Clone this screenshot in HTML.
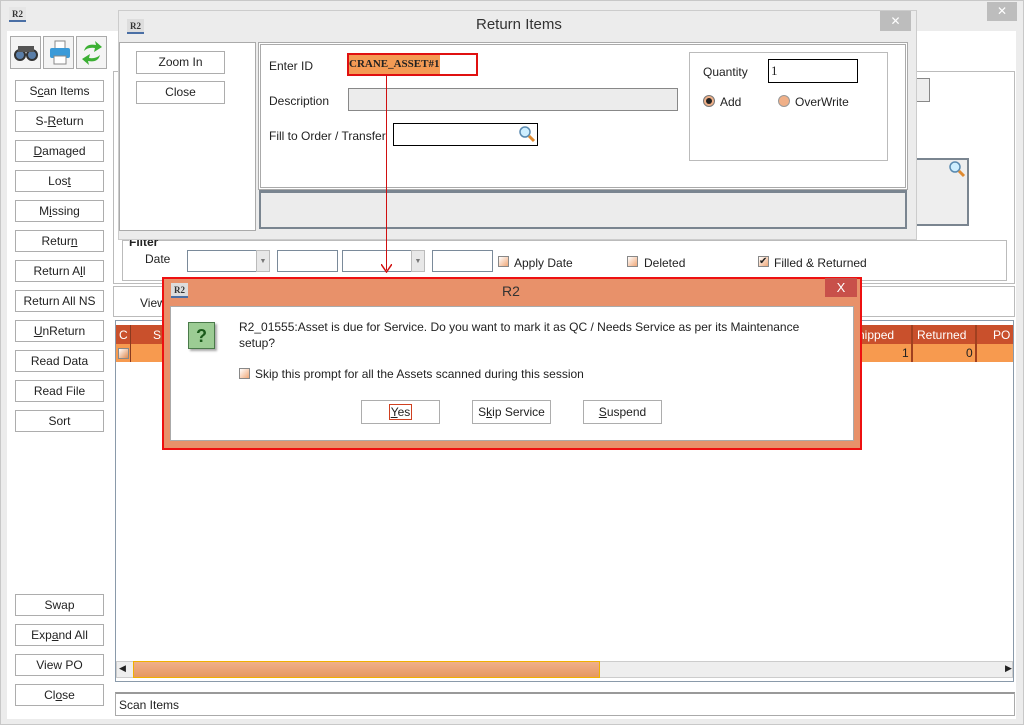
<!DOCTYPE html>
<html><head><meta charset="utf-8"><style>
*{box-sizing:border-box;margin:0;padding:0}
body{width:1024px;height:725px;overflow:hidden;background:#ececec;font-family:"Liberation Sans",Arial,sans-serif;font-size:12px;color:#222;position:relative}
.a{position:absolute}
.btn{position:absolute;background:#fff;border:1px solid #adadad;text-align:center;line-height:20px;font-size:12px;color:#222}
.w{background:#fff}
.cb{position:absolute;width:11px;height:11px;border:1px solid #888;background:linear-gradient(135deg,#fff,#f0a878)}
.lbl{position:absolute;font-size:12px}
</style></head><body>
<div class="a" style="left:0;top:0;width:1024px;height:725px;border:1px solid #c8c8c8"></div>
<div class="a" style="left:9px;top:7px;width:17px;height:15px;border-bottom:2px solid #4a6fa5;background:#e6e6e6;font:bold 9px 'Liberation Serif',serif;color:#333;text-align:center;line-height:14px">R2</div>
<div class="a" style="left:987px;top:2px;width:30px;height:19px;background:#bdbdbd;color:#fff;text-align:center;font-size:12px;line-height:19px">✕</div>
<div class="a w" style="left:7px;top:31px;width:103px;height:688px"></div>
<div class="a" style="left:10px;top:36px;width:31px;height:33px;border:1px solid #aaa;background:#f4f4f4"></div>
<div class="a" style="left:43px;top:36px;width:31px;height:33px;border:1px solid #aaa;background:#f4f4f4"></div>
<div class="a" style="left:76px;top:36px;width:31px;height:33px;border:1px solid #aaa;background:#f4f4f4"></div>
<svg class="a" style="left:13px;top:42px" width="26" height="20"><circle cx="7" cy="13" r="5" fill="#5a7ea8" stroke="#333" stroke-width="2"/><circle cx="19" cy="13" r="5" fill="#5a7ea8" stroke="#333" stroke-width="2"/><rect x="5" y="4" width="16" height="6" fill="#555"/></svg>
<svg class="a" style="left:48px;top:40px" width="24" height="26"><rect x="7" y="1" width="10" height="8" fill="#fff" stroke="#888"/><rect x="2" y="8" width="20" height="10" rx="2" fill="#3a9ad8"/><rect x="6" y="16" width="12" height="8" fill="#fff" stroke="#888"/></svg>
<svg class="a" style="left:81px;top:40px" width="22" height="26"><path d="M3 11 Q5 3 15 5 L14 1 L21 7 L13 12 L14 8 Q7 7 3 11Z" fill="#3cb034"/><path d="M19 15 Q17 23 7 21 L8 25 L1 19 L9 14 L8 18 Q15 19 19 15Z" fill="#3cb034"/></svg>
<div class="btn" style="left:15px;top:80px;width:89px;height:22px">S<u>c</u>an Items</div>
<div class="btn" style="left:15px;top:110px;width:89px;height:22px">S-<u>R</u>eturn</div>
<div class="btn" style="left:15px;top:140px;width:89px;height:22px"><u>D</u>amaged</div>
<div class="btn" style="left:15px;top:170px;width:89px;height:22px">Los<u>t</u></div>
<div class="btn" style="left:15px;top:200px;width:89px;height:22px">M<u>i</u>ssing</div>
<div class="btn" style="left:15px;top:230px;width:89px;height:22px">Retur<u>n</u></div>
<div class="btn" style="left:15px;top:260px;width:89px;height:22px">Return A<u>l</u>l</div>
<div class="btn" style="left:15px;top:290px;width:89px;height:22px">Return All NS</div>
<div class="btn" style="left:15px;top:320px;width:89px;height:22px"><u>U</u>nReturn</div>
<div class="btn" style="left:15px;top:350px;width:89px;height:22px">Read Data</div>
<div class="btn" style="left:15px;top:380px;width:89px;height:22px">Read File</div>
<div class="btn" style="left:15px;top:410px;width:89px;height:22px">Sort</div>
<div class="btn" style="left:15px;top:594px;width:89px;height:22px">Swap</div>
<div class="btn" style="left:15px;top:624px;width:89px;height:22px">Exp<u>a</u>nd All</div>
<div class="btn" style="left:15px;top:654px;width:89px;height:22px">View PO</div>
<div class="btn" style="left:15px;top:684px;width:89px;height:22px">Cl<u>o</u>se</div>
<div class="a w" style="left:110px;top:31px;width:906px;height:688px"></div>
<div class="a" style="left:113px;top:71px;width:902px;height:213px;border:1px solid #bbb"></div>
<div class="a" style="left:915px;top:78px;width:15px;height:24px;border:1px solid #888;background:#eee"></div>
<div class="a" style="left:915px;top:158px;width:54px;height:68px;border:2px solid #7a8590;border-left:none;background:#eee"></div>
<svg class="a" style="left:948px;top:160px" width="18" height="18"><circle cx="7" cy="7" r="5" fill="#cdeeff" stroke="#5a8ab0" stroke-width="1.5"/><path d="M11 11 L16 16" stroke="#e08a30" stroke-width="3"/></svg>
<div class="a" style="left:122px;top:240px;width:885px;height:41px;border:1px solid #bbb"></div>
<div class="lbl" style="left:129px;top:235px;font-weight:bold;background:#fff">Filter</div>
<div class="lbl" style="left:145px;top:252px">Date</div>
<div class="a" style="left:187px;top:250px;width:70px;height:22px;border:1px solid #7a8a9a"></div>
<div class="a" style="left:256px;top:250px;width:14px;height:22px;background:#e8e8e8;border:1px solid #bbb;font-size:7px;text-align:center;line-height:22px;color:#777">▼</div>
<div class="a" style="left:277px;top:250px;width:61px;height:22px;border:1px solid #7a8a9a"></div>
<div class="a" style="left:342px;top:250px;width:70px;height:22px;border:1px solid #7a8a9a"></div>
<div class="a" style="left:411px;top:250px;width:14px;height:22px;background:#e8e8e8;border:1px solid #bbb;font-size:7px;text-align:center;line-height:22px;color:#777">▼</div>
<div class="a" style="left:432px;top:250px;width:61px;height:22px;border:1px solid #7a8a9a"></div>
<div class="cb" style="left:498px;top:256px"></div><div class="lbl" style="left:514px;top:256px">Apply Date</div>
<div class="cb" style="left:627px;top:256px"></div><div class="lbl" style="left:644px;top:256px">Deleted</div>
<div class="cb" style="left:758px;top:256px;font-size:10px;line-height:9px">✔</div><div class="lbl" style="left:774px;top:256px">Filled &amp; Returned</div>
<div class="a" style="left:113px;top:286px;width:902px;height:31px;border:1px solid #bbb"></div>
<div class="lbl" style="left:140px;top:296px">View</div>
<div class="a" style="left:115px;top:320px;width:899px;height:362px;border:1px solid #8a9aaa;background:#fff"></div>
<div class="a" style="left:116px;top:325px;width:897px;height:19px;background:#c9502c"></div>
<div class="a" style="left:116px;top:344px;width:897px;height:18px;background:#f79a4f"></div>
<div class="lbl" style="left:119px;top:328px;color:#fff;font-size:12px">C</div>
<div class="a" style="left:130px;top:325px;width:1px;height:37px;background:#8a3a20"></div>
<div class="lbl" style="left:153px;top:328px;color:#fff">S</div>
<div class="lbl" style="left:858px;top:328px;color:#fff">hipped</div>
<div class="a" style="left:911px;top:325px;width:2px;height:37px;background:#a04020"></div>
<div class="lbl" style="left:917px;top:328px;color:#fff">Returned</div>
<div class="a" style="left:975px;top:325px;width:2px;height:37px;background:#a04020"></div>
<div class="lbl" style="left:993px;top:328px;color:#fff">PO</div>
<div class="lbl" style="left:902px;top:346px">1</div>
<div class="lbl" style="left:966px;top:346px">0</div>
<div class="cb" style="left:118px;top:348px;background:linear-gradient(135deg,#fff,#e08a50)"></div>
<div class="a" style="left:116px;top:661px;width:897px;height:17px;background:#eee;border:1px solid #ccc"></div>
<div class="a" style="left:133px;top:661px;width:467px;height:17px;background:linear-gradient(#f0b08a,#e69860);border:1px solid #f0b000"></div>
<div class="lbl" style="left:119px;top:663px;font-size:9px">◀</div>
<div class="lbl" style="left:1005px;top:663px;font-size:9px">▶</div>
<div class="a" style="left:115px;top:692px;width:900px;height:24px;border:1px solid #aaa;border-top:2px solid #999;background:#fff"></div>
<div class="lbl" style="left:119px;top:698px">Scan Items</div>

<div class="a" style="left:118px;top:10px;width:799px;height:230px;background:#ececec;border:1px solid #ccc"></div>
<div class="a" style="left:127px;top:19px;width:17px;height:15px;border-bottom:2px solid #4a6fa5;background:#ddd;font:bold 9px 'Liberation Serif',serif;color:#333;text-align:center;line-height:14px">R2</div>
<div class="lbl" style="left:476px;top:16px;font-size:15px;color:#333">Return Items</div>
<div class="a" style="left:880px;top:11px;width:31px;height:20px;background:#bdbdbd;color:#fff;text-align:center;font-size:12px;line-height:20px">✕</div>
<div class="a w" style="left:119px;top:42px;width:137px;height:189px;border:1px solid #aaa"></div>
<div class="btn" style="left:136px;top:51px;width:89px;height:23px">Zoom In</div>
<div class="btn" style="left:136px;top:81px;width:89px;height:23px">Close</div>
<div class="a w" style="left:258px;top:42px;width:650px;height:148px;border:3px double #aaa"></div>
<div class="lbl" style="left:269px;top:59px">Enter ID</div>
<div class="a" style="left:347px;top:53px;width:131px;height:23px;border:2px solid #e01010;background:#fff"></div>
<div class="a" style="left:349px;top:55px;height:19px;padding-right:1px;background:#f49a54;font:bold 11px 'Liberation Serif',serif;line-height:19px;white-space:nowrap">CRANE_ASSET#1</div>
<div class="lbl" style="left:269px;top:94px">Description</div>
<div class="a" style="left:348px;top:88px;width:330px;height:23px;border:1px solid #888;background:#ececec"></div>
<div class="lbl" style="left:269px;top:129px">Fill to Order / Transfer</div>
<div class="a w" style="left:393px;top:123px;width:145px;height:23px;border:1px solid #000"></div>
<svg class="a" style="left:518px;top:125px" width="18" height="18"><circle cx="7" cy="7" r="5" fill="#cdeeff" stroke="#5a8ab0" stroke-width="1.5"/><path d="M11 11 L16 16" stroke="#e08a30" stroke-width="3"/></svg>
<div class="a" style="left:689px;top:52px;width:199px;height:109px;border:1px solid #bbb"></div>
<div class="lbl" style="left:703px;top:65px">Quantity</div>
<div class="a w" style="left:768px;top:59px;width:90px;height:24px;border:1px solid #000;font:13px 'Liberation Serif',serif;padding:3px 2px">1</div>
<div class="a" style="left:703px;top:95px;width:12px;height:12px;border-radius:50%;border:1px solid #777;background:#f0b088"><div class="a" style="left:2px;top:2px;width:6px;height:6px;border-radius:50%;background:#222"></div></div>
<div class="lbl" style="left:720px;top:95px">Add</div>
<div class="a" style="left:778px;top:95px;width:12px;height:12px;border-radius:50%;border:1px solid #999;background:#f0b088"></div>
<div class="lbl" style="left:795px;top:95px">OverWrite</div>
<div class="a" style="left:259px;top:190px;width:648px;height:39px;border:2px solid #7a8590;border-top:3px solid #7a8590;background:#ececec"></div>
<div class="a" style="left:386px;top:75px;width:1px;height:195px;background:#d01010"></div>
<svg class="a" style="left:381px;top:264px" width="11" height="9"><path d="M0 0 L5.5 8 L11 0" fill="none" stroke="#d01010" stroke-width="1.5"/></svg>

<div class="a" style="left:162px;top:277px;width:700px;height:173px;background:#e8916a;border:2px solid #ee1010"></div>
<div class="a" style="left:171px;top:283px;width:17px;height:15px;border-bottom:2px solid #4a6fa5;background:#ddd;font:bold 9px 'Liberation Serif',serif;color:#333;text-align:center;line-height:14px">R2</div>
<div class="lbl" style="left:502px;top:283px;font-size:14px;color:#333">R2</div>
<div class="a" style="left:825px;top:278px;width:32px;height:19px;background:#c8504a;color:#fff;text-align:center;font-size:13px;line-height:19px">X</div>
<div class="a w" style="left:170px;top:306px;width:684px;height:135px;border:1px solid #aaa"></div>
<div class="a" style="left:188px;top:322px;width:27px;height:27px;background:#9ccc94;border:1px solid #4a7a4a;box-shadow:2px 2px 2px #aaa;font:bold 18px 'Liberation Sans',sans-serif;color:#1a5a1a;text-align:center;line-height:26px">?</div>
<div class="lbl" style="left:239px;top:319px;line-height:16px;width:580px">R2_01555:Asset is due for Service. Do you want to mark it as QC / Needs Service as per its Maintenance setup?</div>
<div class="cb" style="left:239px;top:368px"></div>
<div class="lbl" style="left:255px;top:367px">Skip this prompt for all the Assets scanned during this session</div>
<div class="btn" style="left:361px;top:400px;width:79px;height:24px;line-height:22px"><span style="border:1px solid #d04020;padding:0 1px"><u>Y</u>es</span></div>
<div class="btn" style="left:472px;top:400px;width:79px;height:24px;line-height:22px">S<u>k</u>ip Service</div>
<div class="btn" style="left:583px;top:400px;width:79px;height:24px;line-height:22px"><u>S</u>uspend</div>
</body></html>
